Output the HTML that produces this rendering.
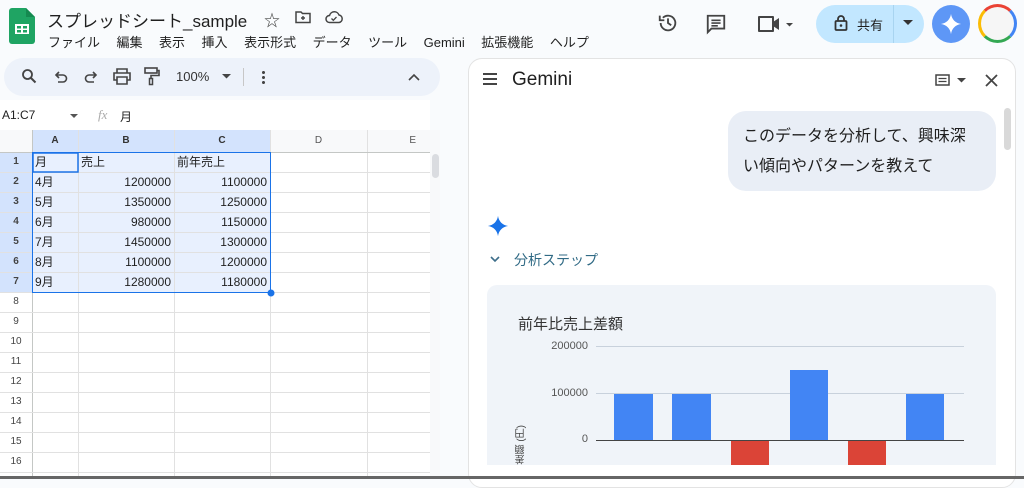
<!DOCTYPE html>
<html><head><meta charset="utf-8">
<style>
*{box-sizing:border-box;margin:0;padding:0}
body{width:1024px;height:479px;overflow:hidden;background:#f9fbfd;font-family:"Liberation Sans","Noto Sans CJK JP",sans-serif;color:#1f1f1f;position:relative}
.abs{position:absolute}
.menu span{margin-right:16.5px}
.grid{position:absolute;left:0;top:130px;width:430px;height:346px;background:#fff;overflow:hidden}
.cell{position:absolute;font-size:12px;line-height:20px;white-space:nowrap}
.rh{position:absolute;left:0;width:32px;text-align:center;font-size:10px;color:#444;line-height:20px}
</style></head><body>
<svg class="abs" style="left:9px;top:8px" width="26" height="36" viewBox="0 0 26 36"><path d="M3 0h14l9 9v24a3 3 0 0 1-3 3H3a3 3 0 0 1-3-3V3a3 3 0 0 1 3-3z" fill="#1fa463"/><path d="M17 0v9h9z" fill="#158a50"/><rect x="6" y="16" width="14" height="10" fill="#fff"/><rect x="8" y="18" width="4" height="2.5" fill="#1fa463"/><rect x="14" y="18" width="4" height="2.5" fill="#1fa463"/><rect x="8" y="22" width="4" height="2.5" fill="#1fa463"/><rect x="14" y="22" width="4" height="2.5" fill="#1fa463"/></svg>
<div class="abs" style="left:47px;top:7px;font-size:17px;color:#1f1f1f">スプレッドシート_sample</div>
<div class="abs" style="left:264px;top:7px;font-size:16px;color:#444">☆</div>
<svg class="abs" style="left:295px;top:10px" width="16" height="14" viewBox="0 0 16 14"><path d="M1 2h5l1.5 1.5H15v9H1z" fill="none" stroke="#444" stroke-width="1.5"/><path d="M8 6v4M6 8h4" stroke="#444" stroke-width="1.4"/></svg>
<svg class="abs" style="left:325px;top:10px" width="18" height="14" viewBox="0 0 18 14"><path d="M4.5 12.5a3.5 3.5 0 0 1 0-7A5 5 0 0 1 14 5a3.8 3.8 0 0 1 0 7.5z" fill="none" stroke="#444" stroke-width="1.5"/><path d="M6.5 8.5l1.8 1.8 3.2-3.3" fill="none" stroke="#444" stroke-width="1.3"/></svg>
<div class="abs menu" style="left:48px;top:32px;font-size:13px;color:#1f1f1f"><span>ファイル</span><span>編集</span><span>表示</span><span>挿入</span><span>表示形式</span><span>データ</span><span>ツール</span><span>Gemini</span><span>拡張機能</span><span>ヘルプ</span></div>
<svg class="abs" style="left:657px;top:12px" width="22" height="22" viewBox="0 0 24 24"><path d="M4 12a8 8 0 1 0 2.4-5.7" fill="none" stroke="#444" stroke-width="2"/><path d="M3 4v5h5" fill="none" stroke="#444" stroke-width="2"/><path d="M12 7v5l3.5 2.5" fill="none" stroke="#444" stroke-width="2"/></svg>
<svg class="abs" style="left:705px;top:13px" width="22" height="22" viewBox="0 0 24 24"><path d="M3 3h18v14H7l-4 4z" fill="none" stroke="#444" stroke-width="2"/><path d="M7 8h10M7 11h10M7 14h7" stroke="#444" stroke-width="1.8"/></svg>
<svg class="abs" style="left:757px;top:14px" width="40" height="20" viewBox="0 0 40 20"><path d="M2 3h14v14H2z" fill="none" stroke="#444" stroke-width="2" stroke-linejoin="round"/><path d="M16 8l6-4v12l-6-4z" fill="#444"/><path d="M29 9h7l-3.5 3.5z" fill="#444"/></svg>
<div class="abs" style="left:816px;top:5px;width:108px;height:38px;border-radius:19px;background:#c2e7ff"></div>
<div class="abs" style="left:893px;top:5px;width:1px;height:38px;background:#a8d4f0"></div>
<svg class="abs" style="left:834px;top:14px" width="14" height="18" viewBox="0 0 14 18"><rect x="1.5" y="7" width="11" height="9" rx="1" fill="none" stroke="#333" stroke-width="1.8"/><path d="M4 7V5a3 3 0 0 1 6 0v2" fill="none" stroke="#333" stroke-width="1.8"/><circle cx="7" cy="11.5" r="1.3" fill="#333"/></svg>
<div class="abs" style="left:857px;top:15px;font-size:13px;color:#1f1f1f">共有</div>
<svg class="abs" style="left:903px;top:20px" width="10" height="6"><path d="M0 0h10L5 5z" fill="#333"/></svg>
<div class="abs" style="left:932px;top:5px;width:38px;height:38px;border-radius:50%;background:#5e97f6"></div>
<svg class="abs" style="left:940px;top:13px" width="22" height="22" viewBox="0 0 24 24"><path d="M12 1C12.8 7 17 11.2 23 12 17 12.8 12.8 17 12 23 11.2 17 7 12.8 1 12 7 11.2 11.2 7 12 1z" fill="#fff"/></svg>
<div class="abs" style="left:978px;top:4px;width:39px;height:39px;border-radius:50%;border:3px solid;border-color:#ea4335 #4285f4 #34a853 #fbbc05;background:#f6f6f6"></div>
<div class="abs" style="left:4px;top:58px;width:436px;height:38px;border-radius:19px;background:#edf2fa"></div>
<svg class="abs" style="left:21px;top:68px" width="16" height="16" viewBox="0 0 16 16"><circle cx="6.5" cy="6.5" r="4.5" fill="none" stroke="#444" stroke-width="1.8"/><path d="M10 10l4.5 4.5" stroke="#444" stroke-width="2"/></svg>
<svg class="abs" style="left:53px;top:70px" width="16" height="14" viewBox="0 0 16 14"><path d="M4 5h6a3.5 3.5 0 0 1 0 7H5" fill="none" stroke="#444" stroke-width="1.6"/><path d="M6 2L3 5l3 3" fill="none" stroke="#444" stroke-width="1.6"/></svg>
<svg class="abs" style="left:83px;top:70px" width="16" height="14" viewBox="0 0 16 14"><path d="M12 5H6a3.5 3.5 0 0 0 0 7h5" fill="none" stroke="#444" stroke-width="1.6"/><path d="M10 2l3 3-3 3" fill="none" stroke="#444" stroke-width="1.6"/></svg>
<svg class="abs" style="left:113px;top:68px" width="18" height="17" viewBox="0 0 18 17"><path d="M4 5V1h10v4M4 12H1V5h16v7h-3M4 9h10v7H4z" fill="none" stroke="#444" stroke-width="1.6"/></svg>
<svg class="abs" style="left:143px;top:67px" width="18" height="19" viewBox="0 0 18 19"><rect x="2" y="1" width="12" height="5" fill="none" stroke="#444" stroke-width="1.6"/><path d="M14 3.5h2v5H8v3" fill="none" stroke="#444" stroke-width="1.6"/><rect x="6.5" y="11.5" width="3" height="6" fill="none" stroke="#444" stroke-width="1.5"/></svg>
<div class="abs" style="left:176px;top:69px;font-size:13px;color:#333">100%</div>
<svg class="abs" style="left:222px;top:74px" width="9" height="5"><path d="M0 0h9L4.5 4.5z" fill="#444"/></svg>
<div class="abs" style="left:243px;top:68px;width:1px;height:18px;background:#c7c7c7"></div>
<div class="abs" style="left:262px;top:70px;width:3px;height:14px;background:radial-gradient(circle,#444 1.4px,transparent 1.6px) 0 0/3px 5px"></div>
<svg class="abs" style="left:408px;top:73px" width="12" height="8"><path d="M1 7l5-5 5 5" fill="none" stroke="#444" stroke-width="1.6"/></svg>
<div class="abs" style="left:0;top:100px;width:430px;height:30px;background:#fff"></div>
<div class="abs" style="left:2px;top:108px;font-size:12px">A1:C7</div>
<svg class="abs" style="left:70px;top:114px" width="8" height="4"><path d="M0 0h8L4 4z" fill="#555"/></svg>
<div class="abs" style="left:98px;top:107px;font-size:13px;font-style:italic;color:#aaa;font-family:'Liberation Serif',serif">fx</div>
<div class="abs" style="left:120px;top:108px;font-size:12px">月</div>
<div class="grid">
<svg width="430" height="346" style="position:absolute;left:0;top:0">
<rect x="0" y="0" width="430" height="22" fill="#f8f9fa"/>
<rect x="32" y="0" width="238" height="22" fill="#d3e3fd"/>
<rect x="0" y="22" width="32" height="140" fill="#d3e3fd"/>
<rect x="32" y="22" width="238" height="140" fill="#e8f0fe"/>
<rect x="0" y="0" width="32" height="22" fill="#f8f9fa"/>
<g stroke="#e1e1e1" stroke-width="1">
<line x1="32.5" y1="0" x2="32.5" y2="346" stroke="#c4c7c5"/>
<line x1="78.5" y1="0" x2="78.5" y2="346"/>
<line x1="174.5" y1="0" x2="174.5" y2="346"/>
<line x1="270.5" y1="0" x2="270.5" y2="346"/>
<line x1="367.5" y1="0" x2="367.5" y2="346"/>
<line x1="0" y1="22.5" x2="430" y2="22.5" stroke="#c4c7c5"/>
<line x1="0" y1="42.5" x2="430" y2="42.5"/><line x1="0" y1="62.5" x2="430" y2="62.5"/><line x1="0" y1="82.5" x2="430" y2="82.5"/><line x1="0" y1="102.5" x2="430" y2="102.5"/><line x1="0" y1="122.5" x2="430" y2="122.5"/><line x1="0" y1="142.5" x2="430" y2="142.5"/><line x1="0" y1="162.5" x2="430" y2="162.5"/><line x1="0" y1="182.5" x2="430" y2="182.5"/><line x1="0" y1="202.5" x2="430" y2="202.5"/><line x1="0" y1="222.5" x2="430" y2="222.5"/><line x1="0" y1="242.5" x2="430" y2="242.5"/><line x1="0" y1="262.5" x2="430" y2="262.5"/><line x1="0" y1="282.5" x2="430" y2="282.5"/><line x1="0" y1="302.5" x2="430" y2="302.5"/><line x1="0" y1="322.5" x2="430" y2="322.5"/><line x1="0" y1="342.5" x2="430" y2="342.5"/>
</g>
<rect x="32.5" y="22.5" width="238" height="140" fill="none" stroke="#1a73e8" stroke-width="1"/>
<rect x="33" y="23" width="45" height="19" fill="none" stroke="#1a73e8" stroke-width="1.5"/>
<circle cx="271" cy="163" r="3.5" fill="#1a73e8"/>
</svg>
<div class="cell" style="left:32px;top:1px;width:46px;text-align:center;font-size:10px;font-weight:bold;color:#333">A</div>
<div class="cell" style="left:78px;top:1px;width:96px;text-align:center;font-size:10px;font-weight:bold;color:#333">B</div>
<div class="cell" style="left:174px;top:1px;width:96px;text-align:center;font-size:10px;font-weight:bold;color:#333">C</div>
<div class="cell" style="left:270px;top:1px;width:97px;text-align:center;font-size:10px;color:#555">D</div>
<div class="cell" style="left:367px;top:1px;width:63px;text-align:right;padding-right:14px;font-size:10px;color:#555">E</div>
<div class="rh" style="top:22px;font-weight:bold">1</div><div class="rh" style="top:42px;font-weight:bold">2</div><div class="rh" style="top:62px;font-weight:bold">3</div><div class="rh" style="top:82px;font-weight:bold">4</div><div class="rh" style="top:102px;font-weight:bold">5</div><div class="rh" style="top:122px;font-weight:bold">6</div><div class="rh" style="top:142px;font-weight:bold">7</div>
<div class="rh" style="top:162px">8</div><div class="rh" style="top:182px">9</div><div class="rh" style="top:202px">10</div><div class="rh" style="top:222px">11</div><div class="rh" style="top:242px">12</div><div class="rh" style="top:262px">13</div><div class="rh" style="top:282px">14</div><div class="rh" style="top:302px">15</div><div class="rh" style="top:322px">16</div>
<div class="cell" style="left:35px;top:22px">月</div><div class="cell" style="left:81px;top:22px">売上</div><div class="cell" style="left:177px;top:22px">前年売上</div>
<div class="cell" style="left:35px;top:42px">4月</div><div class="cell" style="left:78px;top:42px;width:93px;text-align:right">1200000</div><div class="cell" style="left:174px;top:42px;width:93px;text-align:right">1100000</div>
<div class="cell" style="left:35px;top:62px">5月</div><div class="cell" style="left:78px;top:62px;width:93px;text-align:right">1350000</div><div class="cell" style="left:174px;top:62px;width:93px;text-align:right">1250000</div>
<div class="cell" style="left:35px;top:82px">6月</div><div class="cell" style="left:78px;top:82px;width:93px;text-align:right">980000</div><div class="cell" style="left:174px;top:82px;width:93px;text-align:right">1150000</div>
<div class="cell" style="left:35px;top:102px">7月</div><div class="cell" style="left:78px;top:102px;width:93px;text-align:right">1450000</div><div class="cell" style="left:174px;top:102px;width:93px;text-align:right">1300000</div>
<div class="cell" style="left:35px;top:122px">8月</div><div class="cell" style="left:78px;top:122px;width:93px;text-align:right">1100000</div><div class="cell" style="left:174px;top:122px;width:93px;text-align:right">1200000</div>
<div class="cell" style="left:35px;top:142px">9月</div><div class="cell" style="left:78px;top:142px;width:93px;text-align:right">1280000</div><div class="cell" style="left:174px;top:142px;width:93px;text-align:right">1180000</div>
</div>
<div class="abs" style="left:430px;top:130px;width:10px;height:346px;background:#f8f9fa"></div>
<div class="abs" style="left:432px;top:154px;width:7px;height:24px;border-radius:4px;background:#dadce0"></div>
<div class="abs" style="left:468px;top:58px;width:548px;height:430px;background:#fff;border:1px solid #e3e3e3;border-radius:14px"></div>
<div class="abs" style="left:483px;top:73px;width:14px;height:12px;border-top:2px solid #444;border-bottom:2px solid #444"></div>
<div class="abs" style="left:483px;top:78px;width:14px;height:2px;background:#444"></div>
<div class="abs" style="left:512px;top:69px;font-size:19px;color:#1f1f1f">Gemini</div>
<svg class="abs" style="left:935px;top:74px" width="32" height="12" viewBox="0 0 32 12"><rect x="1" y="1" width="13" height="10" fill="none" stroke="#444" stroke-width="1.5"/><path d="M3.5 4.5h8M3.5 7.5h8" stroke="#444" stroke-width="1.2"/><path d="M22 4h9l-4.5 4.5z" fill="#444"/></svg>
<svg class="abs" style="left:985px;top:74px" width="13" height="13"><path d="M1 1l11 11M12 1L1 12" stroke="#444" stroke-width="1.8"/></svg>
<div class="abs" style="left:1004px;top:108px;width:7px;height:42px;border-radius:4px;background:#d9d9d9"></div>
<div class="abs" style="left:728px;top:111px;width:268px;height:80px;border-radius:18px;background:#e9eef6"></div>
<div class="abs" style="left:743px;top:122px;font-size:16px;line-height:30px;color:#1f1f1f">このデータを分析して、興味深<br>い傾向やパターンを教えて</div>
<svg class="abs" style="left:487px;top:215px" width="22" height="22" viewBox="0 0 24 24"><path d="M12 1C12.8 7 17 11.2 23 12 17 12.8 12.8 17 12 23 11.2 17 7 12.8 1 12 7 11.2 11.2 7 12 1z" fill="#1a73e8"/></svg>
<svg class="abs" style="left:490px;top:256px" width="10" height="7"><path d="M1 1l4 4 4-4" fill="none" stroke="#3d6e8a" stroke-width="1.6"/></svg>
<div class="abs" style="left:514px;top:250px;font-size:14px;color:#306a85">分析ステップ</div>
<div class="abs" style="left:487px;top:285px;width:509px;height:180px;border-radius:10px 10px 0 0;background:#f0f4f9"></div>
<div class="abs" style="left:518px;top:313px;font-size:15px;color:#333">前年比売上差額</div>
<div class="abs" style="left:540px;top:340px;width:48px;text-align:right;font-size:11px;color:#555">200000</div>
<div class="abs" style="left:540px;top:387px;width:48px;text-align:right;font-size:11px;color:#555">100000</div>
<div class="abs" style="left:540px;top:433px;width:48px;text-align:right;font-size:11px;color:#555">0</div>
<div class="abs" style="left:596px;top:346px;width:368px;height:1px;background:#c8d1dc"></div>
<div class="abs" style="left:596px;top:393px;width:368px;height:1px;background:#c8d1dc"></div>
<div class="abs" style="left:596px;top:440px;width:368px;height:1px;background:#444"></div>
<div class="abs" style="left:614px;top:394px;width:39px;height:46px;background:#4285f4"></div>
<div class="abs" style="left:672px;top:394px;width:39px;height:46px;background:#4285f4"></div>
<div class="abs" style="left:731px;top:441px;width:38px;height:24px;background:#db4437"></div>
<div class="abs" style="left:790px;top:370px;width:38px;height:70px;background:#4285f4"></div>
<div class="abs" style="left:848px;top:441px;width:38px;height:24px;background:#db4437"></div>
<div class="abs" style="left:906px;top:394px;width:38px;height:46px;background:#4285f4"></div>
<div class="abs" style="left:514px;top:425px;font-size:10px;color:#444;writing-mode:vertical-rl;transform:rotate(180deg)">差額 (円)</div>
<div class="abs" style="left:0;top:476px;width:1024px;height:3px;background:#666"></div>
</body></html>
